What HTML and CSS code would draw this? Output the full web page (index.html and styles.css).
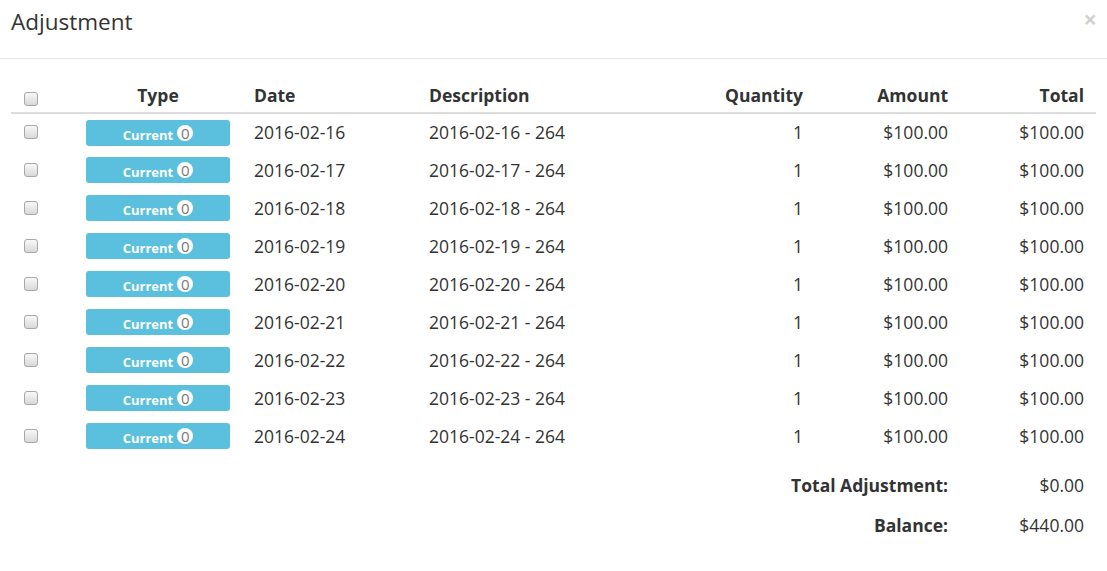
FILE: index.html
```html
<!DOCTYPE html>
<html>
<head>
<meta charset="utf-8">
<link rel="stylesheet" href="styles.css">
</head>
<body>
<div class="modal">
  <div class="modal-header">
    <h4 class="modal-title">Adjustment</h4>
    <span class="close">×</span>
  </div>
  <div class="modal-body">
    <table class="grid">
      <colgroup>
        <col class="w-check"><col class="w-type"><col class="w-date"><col class="w-desc"><col class="w-qty"><col class="w-amt"><col class="w-tot">
      </colgroup>
      <thead>
        <tr>
          <th class="c-check"><span class="cb"></span></th>
          <th class="c-type">Type</th>
          <th class="c-date">Date</th>
          <th class="c-desc">Description</th>
          <th class="c-num">Quantity</th>
          <th class="c-num">Amount</th>
          <th class="c-num c-last">Total</th>
        </tr>
      </thead>
      <tbody>
        <tr><td class="c-check"><span class="cb"></span></td><td class="c-type"><span class="label">Current <span class="badge">0</span></span></td><td class="c-date">2016-02-16</td><td class="c-desc">2016-02-16 - 264</td><td class="c-num">1</td><td class="c-num">$100.00</td><td class="c-num c-last">$100.00</td></tr>
        <tr><td class="c-check"><span class="cb"></span></td><td class="c-type"><span class="label">Current <span class="badge">0</span></span></td><td class="c-date">2016-02-17</td><td class="c-desc">2016-02-17 - 264</td><td class="c-num">1</td><td class="c-num">$100.00</td><td class="c-num c-last">$100.00</td></tr>
        <tr><td class="c-check"><span class="cb"></span></td><td class="c-type"><span class="label">Current <span class="badge">0</span></span></td><td class="c-date">2016-02-18</td><td class="c-desc">2016-02-18 - 264</td><td class="c-num">1</td><td class="c-num">$100.00</td><td class="c-num c-last">$100.00</td></tr>
        <tr><td class="c-check"><span class="cb"></span></td><td class="c-type"><span class="label">Current <span class="badge">0</span></span></td><td class="c-date">2016-02-19</td><td class="c-desc">2016-02-19 - 264</td><td class="c-num">1</td><td class="c-num">$100.00</td><td class="c-num c-last">$100.00</td></tr>
        <tr><td class="c-check"><span class="cb"></span></td><td class="c-type"><span class="label">Current <span class="badge">0</span></span></td><td class="c-date">2016-02-20</td><td class="c-desc">2016-02-20 - 264</td><td class="c-num">1</td><td class="c-num">$100.00</td><td class="c-num c-last">$100.00</td></tr>
        <tr><td class="c-check"><span class="cb"></span></td><td class="c-type"><span class="label">Current <span class="badge">0</span></span></td><td class="c-date">2016-02-21</td><td class="c-desc">2016-02-21 - 264</td><td class="c-num">1</td><td class="c-num">$100.00</td><td class="c-num c-last">$100.00</td></tr>
        <tr><td class="c-check"><span class="cb"></span></td><td class="c-type"><span class="label">Current <span class="badge">0</span></span></td><td class="c-date">2016-02-22</td><td class="c-desc">2016-02-22 - 264</td><td class="c-num">1</td><td class="c-num">$100.00</td><td class="c-num c-last">$100.00</td></tr>
        <tr><td class="c-check"><span class="cb"></span></td><td class="c-type"><span class="label">Current <span class="badge">0</span></span></td><td class="c-date">2016-02-23</td><td class="c-desc">2016-02-23 - 264</td><td class="c-num">1</td><td class="c-num">$100.00</td><td class="c-num c-last">$100.00</td></tr>
        <tr><td class="c-check"><span class="cb"></span></td><td class="c-type"><span class="label">Current <span class="badge">0</span></span></td><td class="c-date">2016-02-24</td><td class="c-desc">2016-02-24 - 264</td><td class="c-num">1</td><td class="c-num">$100.00</td><td class="c-num c-last">$100.00</td></tr>
      </tbody>
      <tfoot>
        <tr class="sum first"><td colspan="6" class="c-num sum-label">Total Adjustment:</td><td class="c-num c-last">$0.00</td></tr>
        <tr class="sum"><td colspan="6" class="c-num sum-label">Balance:</td><td class="c-num c-last">$440.00</td></tr>
      </tfoot>
    </table>
  </div>
</div>
</body>
</html>
```

FILE: styles.css
```css
html, body {
  margin: 0;
  padding: 0;
  background: #fff;
}
body {
  font-family: "Open Sans", "Liberation Sans", sans-serif;
  color: #333;
  font-size: 17.5px;
  line-height: 25px;
}
.modal {
  width: 1107px;
}
.modal-header {
  display: flex;
  align-items: center;
  justify-content: space-between;
  height: 59px;
  box-sizing: border-box;
  padding: 0 12px 0 11px;
  border-bottom: 1px solid #e5e5e5;
}
.modal-title {
  margin: 0;
  font-size: 22.5px;
  font-weight: 400;
  color: #333;
  line-height: 30px;
  position: relative;
  top: -7px;
}
.close {
  font-size: 24px;
  font-weight: 700;
  color: #000;
  opacity: 0.18;
  position: relative;
  top: -10px;
  right: -2px;
  line-height: 1;
}
.modal-body {
  padding: 24px 11px 0 11px;
}
.grid {
  width: 1085px;
  table-layout: fixed;
  border-collapse: collapse;
}
.w-check { width: 65px; }
.w-type { width: 164px; }
.w-date { width: 179px; }
.w-desc { width: 181px; }
.w-qty { width: 213px; }
.w-amt { width: 145px; }
.w-tot { width: 138px; }
.grid th, .grid td {
  padding: 0 10px;
  text-align: left;
  vertical-align: middle;
  white-space: nowrap;
}
.grid thead th {
  font-weight: 700;
  border-bottom: 2px solid #ddd;
  padding-top: 0;
  padding-bottom: 4px;
}
.grid tbody td {
  height: 38px;
  box-sizing: border-box;
}
.grid .c-check {
  padding-left: 13px;
  padding-right: 0;
}
.grid .c-type {
  text-align: center;
}
.grid .c-date {
  padding-left: 14px;
}
.grid .c-num { text-align: right; }
.grid .c-last { padding-right: 12px; }
.cb {
  display: inline-block;
  width: 12px;
  height: 12px;
  border: 1px solid #a8a8a8;
  border-radius: 3px;
  background: linear-gradient(#f8f8f8, #d8d8d8);
  vertical-align: middle;
  position: relative;
  top: -2px;
}
.grid thead .cb { top: 2px; }
.label {
  display: flex;
  align-items: center;
  justify-content: center;
  width: 144px;
  height: 26px;
  box-sizing: border-box;
  background: #5bc0de;
  border-radius: 3px;
  color: #fff;
  font-weight: 700;
  font-size: 13px;
  line-height: 18px;
  padding-top: 4px;
  gap: 4px;
}
.badge {
  display: inline-flex;
  align-items: center;
  justify-content: center;
  width: 16px;
  height: 16px;
  border-radius: 50%;
  background: #fff;
  color: #777;
  font-weight: 400;
  font-size: 15px;
  position: relative;
  top: -2px;
}
.sum td {
  height: 40px;
}
.sum.first td {
  padding-top: 10px;
}
.sum-label {
  font-weight: 700;
}
```
